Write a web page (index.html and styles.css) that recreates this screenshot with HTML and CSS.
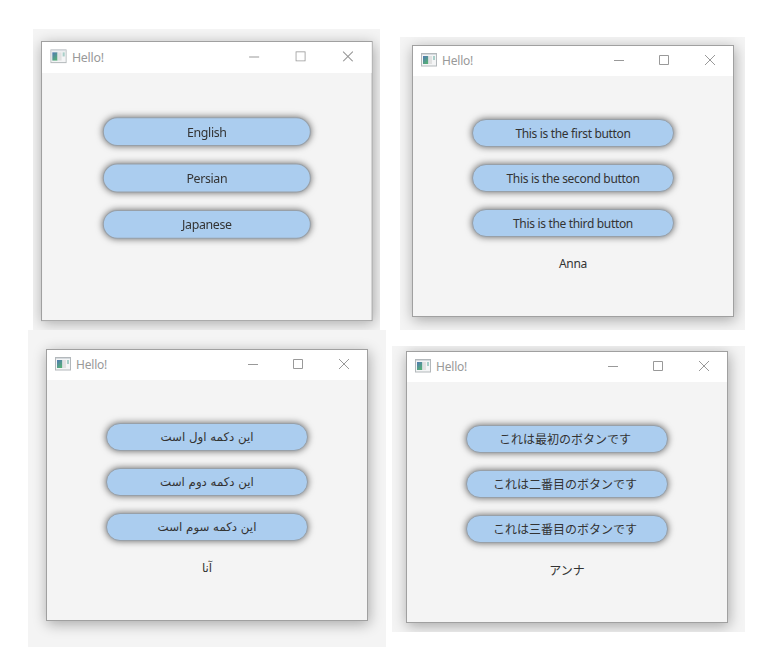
FILE: index.html
```html
<!DOCTYPE html>
<html lang="en">
<head>
<meta charset="utf-8">
<title>Hello!</title>
<link rel="stylesheet" href="styles.css">
</head>
<body>
<svg width="0" height="0" class="defs" aria-hidden="true">
  <defs>
    <linearGradient id="pane" x1="0" y1="0" x2="0.6" y2="1">
      <stop offset="0" stop-color="#5078b4"/><stop offset="1" stop-color="#55ad78"/>
    </linearGradient>
    <symbol id="app" viewBox="0 0 16 14">
      <rect x="0.5" y="0.5" width="15" height="12.5" fill="#f4f5f6" stroke="#b3b8bb"/>
      <path d="M1 1.5h14" stroke="#d5dade"/>
      <rect x="2" y="3" width="5" height="8" fill="url(#pane)"/>
      <rect x="7" y="3" width="1" height="8" fill="#cfd8da"/>
      <rect x="8" y="3" width="3" height="8" fill="#e1e1e1"/>
      <rect x="12" y="3" width="2" height="4" fill="#a9cfc9"/>
    </symbol>
    <symbol id="min" viewBox="0 0 10 10"><path d="M0 5.5h10" stroke="#999"/></symbol>
    <symbol id="max" viewBox="0 0 10 10"><path d="M.5.5h9v9h-9z" fill="none" stroke="#999"/></symbol>
    <symbol id="close" viewBox="0 0 10 10"><path d="M0 0l10 10M10 0L0 10" stroke="#999" stroke-width="1"/></symbol>
  </defs>
</svg>
<main class="page">
  <div class="column">
    <section class="shot shot-language">
      <div class="window enlarged">
        <header class="titlebar"><svg class="app"><use href="#app"/></svg><span class="title">Hello!</span>
          <span class="controls"><svg><use href="#min"/></svg><svg><use href="#max"/></svg><svg><use href="#close"/></svg></span></header>
        <div class="content"><button><span>English</span></button><button><span>Persian</span></button><button><span>Japanese</span></button></div>
      </div>
    </section>
    <section class="shot shot-persian">
      <div class="window">
        <header class="titlebar"><svg class="app"><use href="#app"/></svg><span class="title">Hello!</span>
          <span class="controls"><svg><use href="#min"/></svg><svg><use href="#max"/></svg><svg><use href="#close"/></svg></span></header>
        <div class="content persian" lang="fa" dir="rtl"><button><span>این دکمه اول است</span></button><button><span>این دکمه دوم است</span></button><button><span>این دکمه سوم است</span></button><p>آنا</p></div>
      </div>
    </section>
  </div>
  <div class="column second">
    <section class="shot shot-english">
      <div class="window">
        <header class="titlebar"><svg class="app"><use href="#app"/></svg><span class="title">Hello!</span>
          <span class="controls"><svg><use href="#min"/></svg><svg><use href="#max"/></svg><svg><use href="#close"/></svg></span></header>
        <div class="content"><button><span>This is the first button</span></button><button><span>This is the second button</span></button><button><span>This is the third button</span></button><p>Anna</p></div>
      </div>
    </section>
    <section class="shot shot-japanese">
      <div class="window">
        <header class="titlebar"><svg class="app"><use href="#app"/></svg><span class="title">Hello!</span>
          <span class="controls"><svg><use href="#min"/></svg><svg><use href="#max"/></svg><svg><use href="#close"/></svg></span></header>
        <div class="content japanese" lang="ja"><button><span>これは最初のボタンです</span></button><button><span>これは二番目のボタンです</span></button><button><span>これは三番目のボタンです</span></button><p>アンナ</p></div>
      </div>
    </section>
  </div>
</main>
</body>
</html>
```
FILE: styles.css
```css
* { box-sizing: border-box; }
body { margin: 0; background: #fff; font-family: "Noto Sans", sans-serif; font-size: 12px; color: #333; }
.defs { display: block; }
.page { display: flex; gap: 6px; width: 783px; height: 666px; padding-left: 28px; overflow: hidden; }
.column { width: 358px; padding-top: 29px; }
.second { width: 353px; padding-top: 37px; }
.shot { overflow: hidden; background: #f4f4f4; }
.shot-language { width: 347px; height: 301px; margin-left: 5px; padding: 12px 0 0 7.5px; }
.shot-persian { width: 358px; height: 317px; padding: 19px 0 0 18px; }
.shot-english { width: 345px; height: 293px; margin-left: 8px; padding: 8px 0 0 12px; }
.shot-japanese { width: 353px; height: 286px; margin-top: 16px; padding: 5px 0 0 14px; }
.window { width: 322px; height: 272px; border: 1px solid #a0a0a0; background: #f4f4f4; box-shadow: 1px 3px 13px rgba(0, 0, 0, .32); }
.enlarged { transform: scale(1.03); transform-origin: 0 0; }
.titlebar { display: flex; align-items: center; height: 30px; padding: 0 18px 0 8px; background: #fff; color: #999; }
.app { width: 16px; height: 14px; margin-top: -2px; }
.title { margin: -2px 0 0 5px; font-size: 12px; letter-spacing: -.2px; }
.controls { display: flex; gap: 35px; margin: -2px 0 0 auto; }
.controls svg { display: block; width: 10px; height: 10px; }
.controls svg:last-child { margin-left: 1px; }
.content { display: flex; flex-direction: column; align-items: center; gap: 17px; padding-top: 43px; letter-spacing: -.33px; }
button { display: flex; align-items: center; justify-content: center; width: 202px; height: 28px; padding: 0; border: 1px solid #98a0a8; border-radius: 14px; background: #abcdef; box-shadow: 0 0 7px rgba(0, 0, 0, .6); color: #333; font: inherit; letter-spacing: inherit; white-space: nowrap; }
p { height: 20px; margin: 0; line-height: 20px; }
.persian { font-family: "DejaVu Sans", sans-serif; font-size: 11.8px; letter-spacing: 0; }
.japanese { font-family: "Noto Sans CJK JP", sans-serif; letter-spacing: 0; }
.japanese button { padding: 0 4px 2px 0; }
```
